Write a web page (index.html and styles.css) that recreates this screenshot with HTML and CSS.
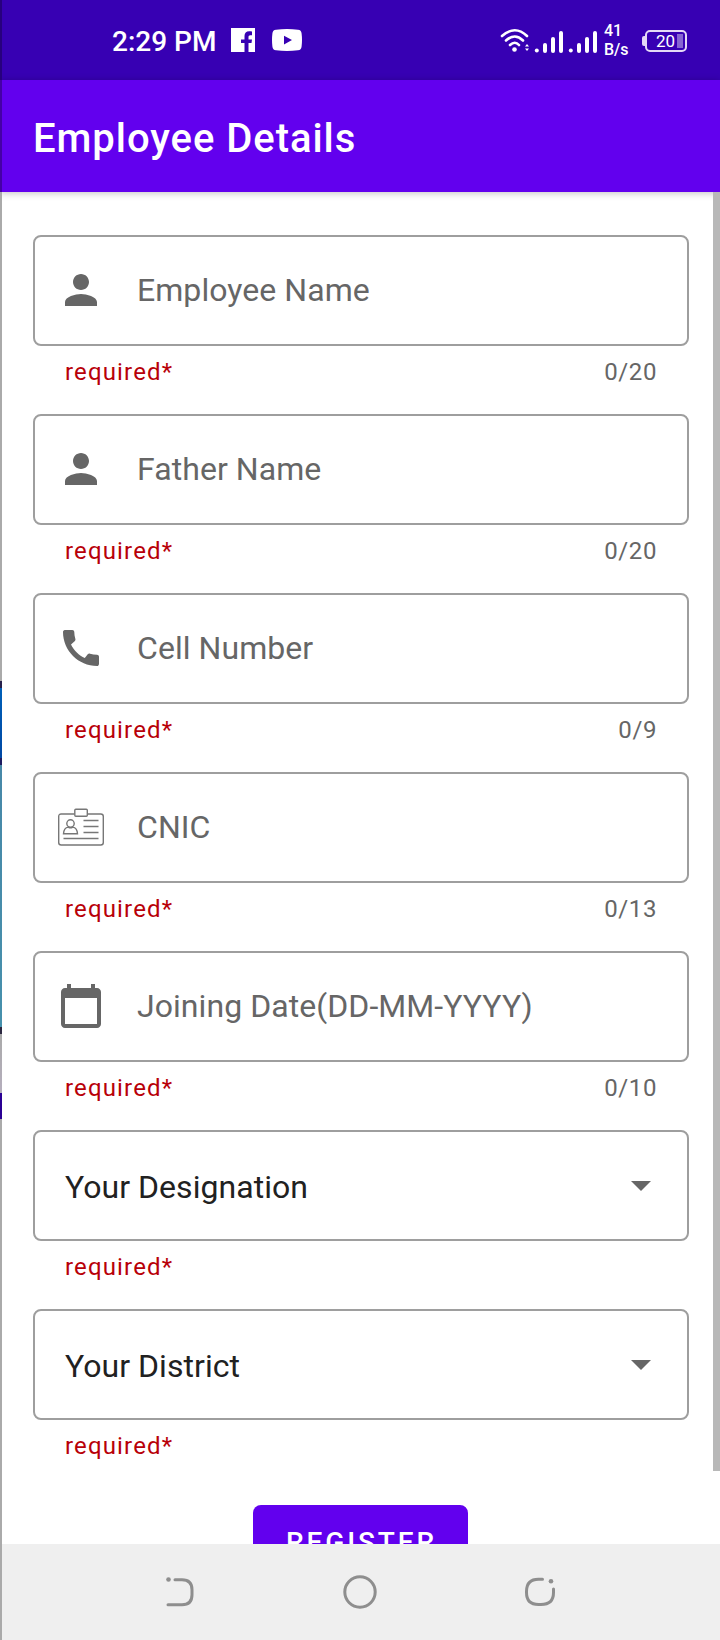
FILE: index.html
```html
<!DOCTYPE html>
<html lang="en">

<head>
    <meta charset="UTF-8">
    <title>Employee Details</title>
    <link rel="stylesheet" href="styles.css">
</head>

<body>
<div class="screen">
    <div class="status">
        <div class="status-left">
            <span class="time">2:29 PM</span>
            <svg class="fb" width="24" height="24" viewBox="0 0 24 24">
                <path fill="#fff" d="M0 0h24v24h-6.500v-9h3l.5-3.500h-3.500V9c0-1 .5-1.800 1.800-1.800H21V3.500c-.8-.2-1.800-.3-2.800-.3-3 0-4.700 1.800-4.700 4.800v3.500H10V15h3.500v9H0z"/>
            </svg>
            <svg width="30" height="22" viewBox="0 0 30 22">
                <path fill="#fff" fill-rule="evenodd" d="M4 .7Q15-.7 26 .7 29.300 1 29.600 4.500 30.400 11 29.600 17.500 29.300 21 26 21.300 15 22.700 4 21.300.7 21 .4 17.500-.4 11 .4 4.500.7 1 4 .7zM12 6.800v8.600l8-4.300z"/>
            </svg>
        </div>
        <div class="status-right">
            <svg width="98" height="26" viewBox="0 0 98 26">
                <g fill="none" stroke="#fff" stroke-width="2.600" stroke-linecap="round">
                    <path d="M2 8Q15-3.500 27 8M6 12.500q9-8 17 0M10 17q5-4.500 9 0"/>
                </g>
                <g fill="#fff">
                    <circle cx="14.500" cy="21.500" r="2.300"/>
                    <path d="M25 18.500l2-2.500 2 2.500zM25 20.500h4l-2 2.500z"/>
                    <circle cx="36.800" cy="22.500" r="2"/>
                    <rect x="43" y="15" width="4" height="10" rx="2"/>
                    <rect x="51" y="9" width="4" height="16" rx="2"/>
                    <rect x="59" y="3" width="4" height="22" rx="2"/>
                    <circle cx="70.800" cy="22.500" r="2"/>
                    <rect x="77" y="15" width="4" height="10" rx="2"/>
                    <rect x="85" y="9" width="4" height="16" rx="2"/>
                    <rect x="93" y="3" width="4" height="22" rx="2"/>
                </g>
            </svg>
            <div class="speed">41<br>B/s</div>
            <div class="battery">20<i></i></div>
        </div>
    </div>
    <div class="appbar">Employee Details</div>

    <form class="form" action="">
        <div class="field">
            <div class="box">
                <svg class="icon" viewBox="0 0 24 24"><path d="M12 12c2.210 0 4-1.790 4-4s-1.790-4-4-4-4 1.790-4 4 1.790 4 4 4zm0 2c-2.670 0-8 1.340-8 4v2h16v-2c0-2.660-5.330-4-8-4z"/></svg>
                <span class="hint">Employee Name</span>
            </div>
            <div class="helper"><span class="required">required*</span><span class="count">0/20</span></div>
        </div>
        <div class="field">
            <div class="box">
                <svg class="icon" viewBox="0 0 24 24"><path d="M12 12c2.210 0 4-1.790 4-4s-1.790-4-4-4-4 1.790-4 4 1.790 4 4 4zm0 2c-2.670 0-8 1.340-8 4v2h16v-2c0-2.660-5.330-4-8-4z"/></svg>
                <span class="hint">Father Name</span>
            </div>
            <div class="helper"><span class="required">required*</span><span class="count">0/20</span></div>
        </div>
        <div class="field">
            <div class="box">
                <svg class="icon" viewBox="0 0 24 24"><path d="M20.010 15.380c-1.230 0-2.420-.2-3.530-.56-.35-.12-.74-.03-1.010.24l-1.570 1.970c-2.830-1.350-5.480-3.900-6.890-6.830l1.950-1.660c.27-.28.35-.67.24-1.020-.37-1.110-.56-2.300-.56-3.530 0-.54-.45-.99-.99-.99H4.190C3.650 3 3 3.240 3 3.990 3 13.280 10.730 21 20.010 21c.71 0 .99-.63.99-1.180v-3.450c0-.54-.45-.99-.99-.99z"/></svg>
                <span class="hint">Cell Number</span>
            </div>
            <div class="helper"><span class="required">required*</span><span class="count">0/9</span></div>
        </div>
        <div class="field">
            <div class="box">
                <svg class="icon line" viewBox="0 0 48 48">
                    <path d="M17.500 11H4.200q-2.500 0-2.500 2.500v26q0 2.500 2.500 2.500h39.600q2.500 0 2.500-2.500v-26q0-2.500-2.500-2.500H30.500"/>
                    <rect x="17.800" y="6.300" width="12.500" height="7" rx="1"/>
                    <circle cx="13.500" cy="20.500" r="3.700"/>
                    <path d="M6.500 30.800q.3-6 4.800-6.700 2.200 1.500 4.400 0 4.500.7 4.800 6.700zM26.500 17.500h15M26.500 23.500h15M26.500 29.500h15M6.500 35.500h35"/>
                </svg>
                <span class="hint">CNIC</span>
            </div>
            <div class="helper"><span class="required">required*</span><span class="count">0/13</span></div>
        </div>
        <div class="field">
            <div class="box">
                <svg class="icon" viewBox="0 0 24 24"><path d="M20 3h-1V1h-2v2H7V1H5v2H4c-1.100 0-2 .9-2 2v16c0 1.100.9 2 2 2h16c1.100 0 2-.9 2-2V5c0-1.100-.9-2-2-2zm0 18H4V8h16v13z"/></svg>
                <span class="hint">Joining Date(DD-MM-YYYY)</span>
            </div>
            <div class="helper"><span class="required">required*</span><span class="count">0/10</span></div>
        </div>
        <div class="field">
            <div class="box select">
                <span class="value">Your Designation</span>
                <svg class="icon" viewBox="0 0 24 24"><path d="M7 10l5 5 5-5z"/></svg>
            </div>
            <div class="helper"><span class="required">required*</span></div>
        </div>
        <div class="field">
            <div class="box select">
                <span class="value">Your District</span>
                <svg class="icon" viewBox="0 0 24 24"><path d="M7 10l5 5 5-5z"/></svg>
            </div>
            <div class="helper"><span class="required">required*</span></div>
        </div>
        <button class="register" type="button">REGISTER</button>
    </form>

    <div class="navbar">
        <svg width="34" height="34" viewBox="0 0 34 34">
            <circle cx="5.500" cy="4.500" r="2.300" fill="#8e8e8e"/>
            <path d="M12 4.800h7q10 0 10 10v5q0 10-10 10H5"/>
        </svg>
        <svg width="34" height="34" viewBox="0 0 34 34"><circle cx="17" cy="17" r="15.200"/></svg>
        <svg width="34" height="34" viewBox="0 0 34 34">
            <path d="M19.500 4.300h-4Q3.500 4.300 3.500 16.500v1Q3.500 29.500 15.500 29.500h2.500Q30.500 29.500 30.500 17.500V14"/>
            <circle cx="28" cy="6.300" r="2.300" fill="#8e8e8e"/>
        </svg>
    </div>

    <div class="scrollbar"></div>
    <div class="edge"></div>
</div>
</body>

</html>
```
FILE: styles.css
```css
html,
body {
    margin: 0;
    font-family: Roboto, "Liberation Sans", sans-serif;
}

.screen {
    position: relative;
    display: flex;
    flex-direction: column;
    width: 720px;
    height: 1640px;
    overflow: hidden;
    background: #fff;
}

/* status bar */
.status {
    display: flex;
    justify-content: space-between;
    flex: none;
    box-sizing: border-box;
    height: 80px;
    padding: 0 33px 0 112px;
    background: #3700b3;
    color: #fff;
}

.status-left,
.status-right {
    display: flex;
    align-items: center;
}

.time {
    width: 119px;
    font-size: 28px;
    font-weight: 500;
    line-height: 32px;
    padding-top: 4px;
    white-space: nowrap;
}

.fb {
    margin-right: 17px;
}

.status-right svg {
    margin-top: 1px;
}

.speed {
    width: 41px;
    margin-left: 6px;
    font-size: 16px;
    font-weight: 500;
    line-height: 19px;
}

.battery {
    position: relative;
    box-sizing: border-box;
    width: 42px;
    height: 22px;
    padding-left: 9px;
    margin-top: 2px;
    border: 2px solid #e4d9f6;
    border-radius: 5px;
    font-size: 17px;
    line-height: 19px;
}

.battery:before {
    content: "";
    position: absolute;
    left: -5px;
    top: 4px;
    width: 3px;
    height: 10px;
    border-radius: 2px 0 0 2px;
    background: #e4d9f6;
}

.battery i {
    position: absolute;
    right: 2px;
    top: 2px;
    width: 6px;
    height: 14px;
    background: #8765d2;
}

.appbar {
    position: relative;
    flex: none;
    box-sizing: border-box;
    height: 112px;
    padding-left: 33px;
    background: #6200ee;
    box-shadow: 0 1px 7px rgba(0, 0, 0, .25);
    color: #fff;
    font-size: 40px;
    font-weight: 500;
    letter-spacing: .95px;
    line-height: 118px;
}

/* form */
.form {
    display: flex;
    flex: 1;
    flex-direction: column;
    min-height: 0;
    overflow: hidden;
    padding: 43px 31px 0 33px;
}

.field {
    flex: none;
    height: 179px;
}

.box {
    display: flex;
    align-items: center;
    box-sizing: border-box;
    height: 111px;
    padding: 0 22px 1px;
    border: 2px solid #9e9e9e;
    border-radius: 8px;
}

.icon {
    flex: none;
    width: 48px;
    height: 48px;
    fill: #666;
}

.line {
    fill: none;
    stroke: #777;
    stroke-width: 1.4;
}

.hint {
    margin-left: 32px;
    color: #666;
    font-size: 32px;
    letter-spacing: .06px;
}

.select {
    justify-content: space-between;
    padding-left: 30px;
}

.value {
    padding-top: 4px;
    color: #212121;
    font-size: 32px;
    letter-spacing: .04px;
}

.helper {
    display: flex;
    justify-content: space-between;
    padding: 10px 32px 0;
    font-size: 24px;
    line-height: 32px;
}

.required {
    color: #b80008;
    letter-spacing: 1.15px;
}

.count {
    color: #666;
    letter-spacing: .6px;
}

.register {
    align-self: center;
    flex: none;
    width: 215px;
    height: 73px;
    margin-top: 17px;
    margin-right: 2px;
    padding: 2px 0 0 3px;
    border: 0;
    border-radius: 8px;
    background: #6200ee;
    color: #fff;
    font-family: inherit;
    font-size: 28px;
    font-weight: 500;
    letter-spacing: 2.9px;
}

/* system navigation */
.navbar {
    display: flex;
    align-items: center;
    justify-content: space-between;
    flex: none;
    box-sizing: border-box;
    height: 96px;
    padding: 0 163px;
    background: #efefef;
}

.navbar svg {
    fill: none;
    stroke: #8e8e8e;
    stroke-width: 3;
    stroke-linecap: round;
}

.navbar svg circle[fill] {
    stroke: none;
}

.scrollbar {
    position: absolute;
    top: 192px;
    right: 0;
    width: 7px;
    height: 1279px;
    background: #b8b8b8;
}

/* sliver of the previous screen on the left */
.edge {
    position: absolute;
    left: 0;
    top: 0;
    width: 2px;
    height: 1640px;
    background: linear-gradient(#27007e 80px, #4500a6 80px, #4500a6 192px, #aaa 192px, #aaa 681px,
        #26204c 681px, #26204c 688px, #0060b8 688px, #0048a4 758px, #1e1c60 758px, #1e1c60 765px,
        #4788a8 765px, #4690ac 1027px, #2b2740 1027px, #2b2740 1034px, #aaa 1034px, #b5aebd 1093px,
        #2a0094 1093px, #2a0094 1119px, #aaa 1119px);
}
```
